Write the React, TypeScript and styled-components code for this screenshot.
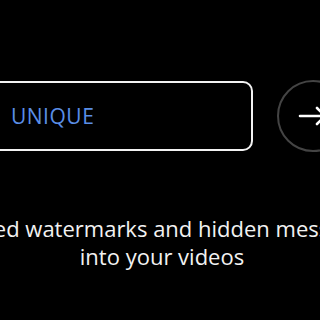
import React from "react";
import styled, { createGlobalStyle } from "styled-components";

const Global = createGlobalStyle`
  html, body { margin: 0; padding: 0; background: #000; }
  body { font-family: "Open Sans", "Noto Sans", sans-serif; }
`;

const Page = styled.div`
  width: 320px;
  height: 320px;
  overflow: hidden;
  background: #000;
  display: flex;
  flex-direction: column;
  align-items: center;
  padding: 80px 0 0 4px;
  box-sizing: border-box;
  gap: 62px;
`;

const Row = styled.div`
  display: flex;
  align-items: center;
  gap: 24px;
  flex: none;
`;

const InputBox = styled.div`
  width: 278px;
  height: 70px;
  box-sizing: border-box;
  border: 2px solid #f2f2f2;
  border-radius: 10px;
  display: flex;
  align-items: center;
  padding-left: 34px;
  color: #5a8ee6;
  font-size: 21px;
  letter-spacing: 0.5px;
`;

const CircleButton = styled.div`
  width: 72px;
  height: 72px;
  flex: none;
  box-sizing: border-box;
  border: 2px solid #444;
  border-radius: 50%;
  display: flex;
  align-items: center;
  justify-content: center;
`;

const Caption = styled.div`
  flex: none;
  white-space: nowrap;
  text-align: center;
  color: #f2f2f2;
  font-size: 22px;
  line-height: 28px;
`;

export default function App() {
  return (
    <>
      <Global />
      <Page>
        <Row>
          <InputBox>UNIQUE</InputBox>
          <CircleButton>
            <svg width="30" height="24" viewBox="0 0 30 24" fill="none">
              <path
                d="M2 12h25M19 4l8 8-8 8"
                stroke="#fff"
                strokeWidth="2.6"
                strokeLinecap="round"
                strokeLinejoin="round"
              />
            </svg>
          </CircleButton>
        </Row>
        <Caption>
          Embed watermarks and hidden messages
          <br />
          into your videos
        </Caption>
      </Page>
    </>
  );
}
